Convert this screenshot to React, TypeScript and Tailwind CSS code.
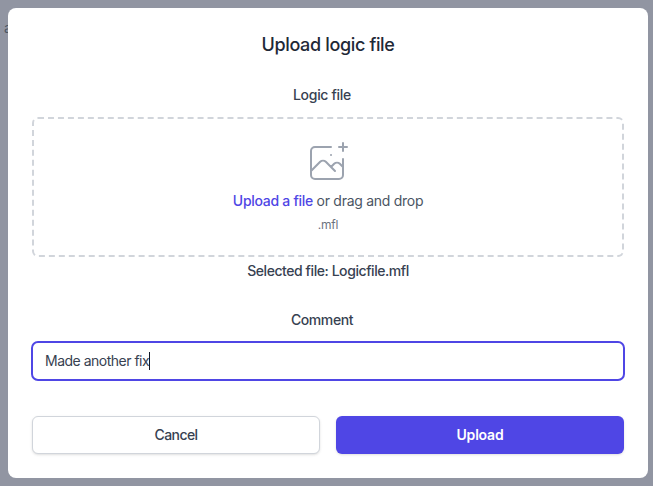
export default function App() {
  return (
    <div className="relative h-[486px] w-[653px] overflow-hidden bg-[#9195a2] font-['Inter',sans-serif] pt-2 pl-2">
      <span className="absolute left-[4px] top-[18px] text-sm text-[#4b5563]">a</span>
      <div className="relative flex h-[470px] w-[640px] flex-col rounded-lg bg-white px-6 pt-6">
        <h3 className="mt-[1px] text-center text-lg leading-6 font-medium tracking-[-0.35px] text-[#1f2937]">Upload logic file</h3>
        <div className="mt-[28px] flex justify-center pr-3">
          <label className="block text-sm leading-5 font-medium tracking-[-0.3px] text-[#374151]">Logic file</label>
        </div>
        <div className="mt-3 flex h-[140px] flex-col items-center rounded-md border-2 border-dashed border-[#d1d5db] pt-[20px]">
          <svg className="mr-[2px] h-12 w-12 text-[#9ca3af]" viewBox="0 0 48 48" fill="none" stroke="currentColor" strokeWidth="2" strokeLinecap="round" strokeLinejoin="round">
            <path d="M28 8H12a4 4 0 00-4 4v20m32-12v8m0 0v8a4 4 0 01-4 4H12a4 4 0 01-4-4v-4m32-4l-3.172-3.172a4 4 0 00-5.656 0L28 28M8 32l9.172-9.172a4 4 0 015.656 0L28 28m0 0l4 4m4-24h8m-4-4v8m-12 4h.02" />
          </svg>
          <p className="mt-[4px] text-sm leading-5 tracking-[-0.28px] text-[#4b5563]">
            <span className="font-medium text-[#4f46e5]">Upload a file</span> or drag and drop
          </p>
          <p className="mt-[6px] text-xs leading-4 tracking-[-0.2px] text-[#6b7280]">.mfl</p>
        </div>
        <p className="mt-[4px] text-center text-sm leading-5 font-medium tracking-[-0.43px] text-[#374151]">Selected file: Logicfile.mfl</p>
        <div className="mt-[29px] flex justify-center pr-3">
          <label className="block text-sm leading-5 font-medium tracking-[-0.4px] text-[#374151]">Comment</label>
        </div>
        <div className="-mx-px mt-[11px] flex h-[40px] items-center rounded-[7px] border-2 border-[#4f46e5] bg-white px-[12px] text-sm tracking-[-0.5px] text-[#374151]">
          <span>Made another fix</span>
          <span className="h-[18px] w-px bg-[#111827]" />
        </div>
        <div className="mt-[35px] grid grid-cols-2 gap-4">
          <button className="h-[38px] rounded-md border border-[#d1d5db] bg-white text-sm font-medium tracking-[-0.6px] text-[#374151] shadow-sm">Cancel</button>
          <button className="h-[38px] rounded-md bg-[#4f46e5] text-sm font-semibold tracking-[-0.2px] text-white shadow-sm">Upload</button>
        </div>
      </div>
    </div>
  );
}
